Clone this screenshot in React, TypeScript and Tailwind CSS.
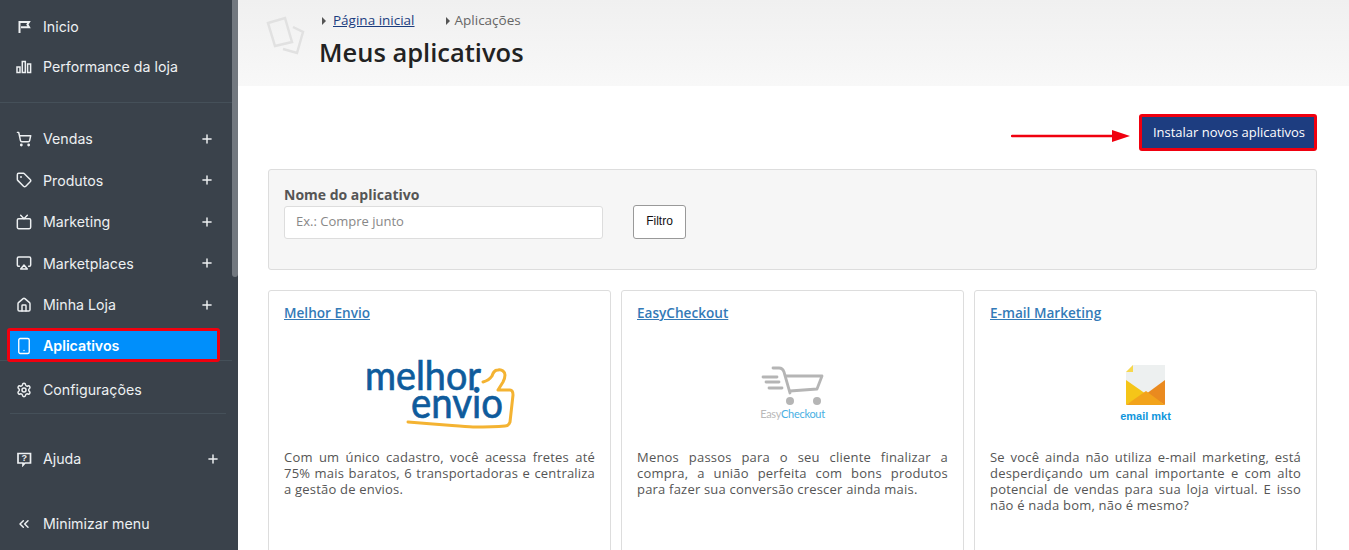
import { Airplay, ChevronsLeft, House, Plus, Settings, ShoppingCart, Smartphone, Tag, Tv } from "lucide-react";
import React from "react";

function FlagIcon() {
  return (
    <svg width="16" height="16" viewBox="0 0 16 16" fill="none" stroke="currentColor" strokeWidth="2">
      <path d="M3.5 14V3h9.5l-1.6 2.6L13 8.2H5" />
    </svg>
  );
}

function BarsIcon() {
  return (
    <svg width="16" height="16" viewBox="0 0 16 16" fill="none" stroke="currentColor" strokeWidth="1.5">
      <rect x="1" y="8" width="3" height="5.5" />
      <rect x="6.3" y="2.5" width="3" height="11" />
      <rect x="11.6" y="5" width="3" height="8.5" />
    </svg>
  );
}

function HelpIcon() {
  return (
    <svg width="16" height="16" viewBox="0 0 16 16" fill="none">
      <path d="M2 2.5h12.5v9.5H9l-2 2.2V12H2z" stroke="currentColor" strokeWidth="1.7" />
      <text x="8.2" y="10.4" textAnchor="middle" fontSize="9" fontWeight="700" fill="currentColor" fontFamily="'Liberation Sans', sans-serif">?</text>
    </svg>
  );
}

function NavRow({ icon, label, plus, className }: { icon: React.ReactNode; label: string; plus?: boolean; className: string }) {
  return (
    <div className={`flex items-center text-[14.2px] text-[#edf0f2] ${className}`}>
      <span className="flex w-[43px] shrink-0 pl-[16px]">{icon}</span>
      <span>{label}</span>
      {plus && <Plus size={14} strokeWidth={2.5} className="ml-auto mr-[24px]" />}
    </div>
  );
}

function Sidebar() {
  return (
    <aside className="relative flex h-[550px] w-[238px] shrink-0 flex-col bg-[#3a424b] font-['Inter',sans-serif]">
      <NavRow icon={<FlagIcon />} label="Inicio" className="mt-[7px] h-[40px]" />
      <NavRow icon={<BarsIcon />} label="Performance da loja" className="h-[40px]" />
      <div className="mt-[15px] h-px w-[232px] bg-[#455059]" />
      <NavRow icon={<ShoppingCart size={16} strokeWidth={2.2} />} label="Vendas" plus className="mt-[15px] h-[41.5px]" />
      <NavRow icon={<Tag size={16} strokeWidth={2.2} />} label="Produtos" plus className="h-[41.5px]" />
      <NavRow icon={<Tv size={16} strokeWidth={2.2} />} label="Marketing" plus className="h-[41.5px]" />
      <NavRow icon={<Airplay size={16} strokeWidth={2.2} />} label="Marketplaces" plus className="h-[41.5px]" />
      <NavRow icon={<House size={16} strokeWidth={2.2} />} label="Minha Loja" plus className="h-[41.5px]" />
      <div className="relative ml-[7px] mt-[2px] flex h-[34px] w-[213px] items-center rounded-[3px] border-[3px] border-[#f0000f] bg-[#008ffb] pt-[2px] text-[14.2px] font-semibold text-white">
        <span className="flex w-[33px] shrink-0 pl-[5px]">
          <Smartphone size={18} strokeWidth={1.8} />
        </span>
        <span>Aplicativos</span>
      </div>
      <div className="mt-[-2px] h-px w-[232px] bg-[#455059]" />
      <NavRow icon={<Settings size={16} strokeWidth={2.2} />} label="Configurações" className="mt-[9px] h-[40px]" />
      <div className="mx-[10px] mt-[3px] h-px w-[216px] bg-[#455059]" />
      <NavRow icon={<HelpIcon />} label="Ajuda" plus className="mt-[25px] h-[40px] [&>svg]:mr-[18px]" />
      <NavRow icon={<ChevronsLeft size={16} strokeWidth={2.2} />} label="Minimizar menu" className="mt-[25px] h-[40px]" />
      <div className="absolute right-0 top-0 h-[277px] w-[6px] rounded-b-[3px] bg-[#72787f]" />
    </aside>
  );
}

function PapersIcon() {
  return (
    <svg width="40" height="40" viewBox="0 0 40 40" fill="none" stroke="#e1e1e1" strokeWidth="2.5" className="shrink-0">
      <path d="M2 7 19 2l7 24-17 4z" />
      <path d="M27 11l10 5-6 21-14-4" />
    </svg>
  );
}

function Header() {
  return (
    <header className="flex h-[86px] bg-gradient-to-b from-[#f0f0f0] to-[#f8f8f8]">
      <div className="ml-[28px] mt-[16px]">
        <PapersIcon />
      </div>
      <div className="ml-[13px]">
        <div className="ml-[3px] mt-[12px] flex items-center text-[13.5px] leading-[17px] text-[#666]">
          <span className="mr-[7px] h-0 w-0 border-y-[4px] border-l-[4px] border-y-transparent border-l-[#555]" />
          <a className="text-[#1b3d7f] underline">Página inicial</a>
          <span className="ml-[31px] mr-[5px] h-0 w-0 border-y-[4px] border-l-[4px] border-y-transparent border-l-[#555]" />
          <span>Aplicações</span>
        </div>
        <h1 className="mt-[5px] text-[25.5px] font-semibold leading-[36px] text-[#222]">Meus aplicativos</h1>
      </div>
    </header>
  );
}

function MelhorEnvioLogo() {
  return (
    <svg width="160" height="92" viewBox="0 -8 160 92">
      <path
        d="M123 26c4-1 7-3 9-6 1-3 2-6 6-6 4-1 7 2 7 5 0 3-1 5-2 7l-5 8h12c2 0 3 2 3 5l-3 27c-1 3-3 4-5 4-11 1-22 1-32 1-11 0-22-2-65-5"
        fill="none"
        stroke="#f4b332"
        strokeWidth="3"
        strokeLinejoin="round"
        strokeLinecap="round"
      />
      <text x="5" y="34" fontSize="40" fontFamily="'Lato',sans-serif" fill="#0e5b9c" stroke="#0e5b9c" strokeWidth="0.7" textLength="116" lengthAdjust="spacingAndGlyphs">melhor</text>
      <text x="51" y="62" fontSize="42" fontFamily="'Lato',sans-serif" fill="#0e5b9c" stroke="#0e5b9c" strokeWidth="0.7" textLength="92" lengthAdjust="spacingAndGlyphs">envio</text>
    </svg>
  );
}

function EasyCheckoutLogo() {
  return (
    <div className="mb-[4px] flex flex-col items-center">
      <svg width="66" height="41" viewBox="0 0 66 41" fill="none" stroke="#b5b5b5" strokeWidth="2.8" strokeLinecap="round" strokeLinejoin="round">
        <path d="M13 3h6c3 0 4 1 5 4l6 21" />
        <path d="M26 11h36l-5 13-27 2" />
        <path d="M3 12h14M6 17h13M9 23h13" />
        <circle cx="30" cy="36" r="4" fill="#b5b5b5" stroke="none" />
        <circle cx="57" cy="36" r="4" fill="#b5b5b5" stroke="none" />
      </svg>
      <div className="mt-[2px] font-['Lato',sans-serif] text-[11px] leading-[12px] tracking-[-0.3px] text-[#b9b9b9]">
        Easy<span className="text-[#48afe3]">Checkout</span>
      </div>
    </div>
  );
}

function EmailMktLogo() {
  return (
    <div className="flex flex-col items-center">
      <svg width="39" height="40" viewBox="0 0 39 40">
        <path d="M7 0h32v17L20 29 0 17V7z" fill="#edf0f0" />
        <path d="M7 0v7H0z" fill="#f7d84c" />
        <path d="M0 15l20 14L0 40z" fill="#f5c518" />
        <path d="M39 15 20 29l19 11z" fill="#ea8a1f" />
        <path d="M0 40l20-14 19 14z" fill="#f2a31b" />
      </svg>
      <div className="mt-[4px] font-['Liberation_Sans',sans-serif] text-[11px] font-bold leading-[14px] text-[#0f96dc]">email mkt</div>
    </div>
  );
}

function AppCard({ title, logo, text }: { title: string; logo: React.ReactNode; text: string }) {
  return (
    <article className="h-[300px] flex-1 rounded-[3px] border border-[#ddd] bg-white px-[15px] pt-[13px]">
      <a className="block text-[13.6px] font-semibold leading-[18px] text-[#337ab7] underline">{title}</a>
      <div className="mt-[22px] flex h-[100px] items-center justify-center">{logo}</div>
      <p className="mt-[5px] text-justify text-[13px] leading-[16px] tracking-[0.2px] text-[#555]">{text}</p>
    </article>
  );
}

export default function App() {
  return (
    <div className="flex h-[550px] w-full overflow-hidden bg-white font-['Open_Sans',sans-serif]">
      <Sidebar />
      <main className="relative min-w-0 flex-1">
        <Header />
        <div className="pl-[30px] pr-[32px] pt-[28px]">
          <div className="flex justify-end">
            <button className="h-[37px] w-[178px] rounded-[3px] border-[3px] border-[#f0000f] bg-[#1d3d80] pl-[2px] text-[13px] text-white">
              Instalar novos aplicativos
            </button>
          </div>
          <form className="mt-[18px] flex h-[101px] rounded-[3px] border border-[#ddd] bg-[#f6f6f6] pl-[15px] pt-[15px]">
            <div>
              <label className="mb-[2px] block text-[14px] font-bold leading-[19px] text-[#555]">Nome do aplicativo</label>
              <input
                placeholder="Ex.: Compre junto"
                className="h-[33px] w-[319px] rounded-[3px] border border-[#ddd] bg-white px-[11px] pb-[3px] text-[13px] placeholder:text-[#888]"
              />
            </div>
            <button
              type="button"
              className="ml-[30px] mt-[20px] h-[34px] w-[53px] rounded-[3px] border border-[#999] bg-white pb-[2px] font-['Liberation_Sans',sans-serif] text-[12px] text-[#111]"
            >
              Filtro
            </button>
          </form>
          <div className="mt-[20px] flex gap-[10px]">
            <AppCard
              title="Melhor Envio"
              logo={<MelhorEnvioLogo />}
              text="Com um único cadastro, você acessa fretes até 75% mais baratos, 6 transportadoras e centraliza a gestão de envios."
            />
            <AppCard
              title="EasyCheckout"
              logo={<EasyCheckoutLogo />}
              text="Menos passos para o seu cliente finalizar a compra, a união perfeita com bons produtos para fazer sua conversão crescer ainda mais."
            />
            <AppCard
              title="E-mail Marketing"
              logo={<EmailMktLogo />}
              text="Se você ainda não utiliza e-mail marketing, está desperdiçando um canal importante e com alto potencial de vendas para sua loja virtual. E isso não é nada bom, não é mesmo?"
            />
          </div>
        </div>
        {/* seta vermelha apontando pro botao */}
        <svg width="120" height="16" viewBox="0 0 120 16" className="absolute left-[773px] top-[128px]">
          <path d="M1 8h100" stroke="#f0000f" strokeWidth="2.5" strokeLinecap="round" />
          <path d="M101 2l18 6-18 6z" fill="#f0000f" />
        </svg>
      </main>
    </div>
  );
}
